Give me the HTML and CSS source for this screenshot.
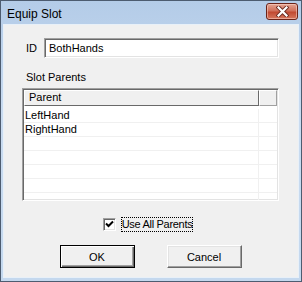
FILE: index.html
```html
<!DOCTYPE html>
<html lang="en">
<head>
  <meta charset="UTF-8">
  <title>Equip Slot</title>
  <link rel="stylesheet" href="styles.css">
</head>
<body>
  <div class="window">
    <div class="titlebar">
      <span class="title">Equip Slot</span>
      <button class="close">
        <svg width="13" height="11" viewBox="0 0 13 11">
          <path d="M2.5 1.5 L10.5 9.5 M10.5 1.5 L2.5 9.5" stroke="#6a2a20" stroke-width="4" stroke-linecap="square"/>
          <path d="M2.5 1.5 L10.5 9.5 M10.5 1.5 L2.5 9.5" stroke="#fff" stroke-width="2.2" stroke-linecap="square"/>
        </svg>
      </button>
    </div>

    <div class="client">
      <div class="id-row">
        <label class="id-label">ID</label>
        <div class="textbox">BothHands</div>
      </div>

      <div class="section-label">Slot Parents</div>

      <div class="listview">
        <div class="lv-header">
          <div class="lv-col main">Parent</div>
          <div class="lv-col rest"></div>
        </div>
        <div class="lv-body" id="rows"></div>
      </div>

      <div class="check-row">
        <span class="checkbox">
          <svg width="9" height="9" viewBox="0 0 9 9">
            <path d="M1 3.5 L3.5 6 L8 1.5" stroke="#000" stroke-width="2" fill="none"/>
          </svg>
        </span>
        <span class="check-label">Use All Parents</span>
      </div>

      <div class="buttons">
        <button class="btn default">OK</button>
        <button class="btn">Cancel</button>
      </div>
    </div>
  </div>

  <script>
    const parents = ["LeftHand", "RightHand", "", "", "", "", ""];
    const rows = document.getElementById('rows');
    parents.forEach(name => {
      const row = document.createElement('div');
      row.className = 'lv-row';
      row.innerHTML = `<div class="lv-cell main">${name}</div><div class="lv-cell rest"></div>`;
      rows.appendChild(row);
    });
  </script>
</body>
</html>
```

FILE: styles.css
```css
body {
  margin: 0;
  font-family: "Liberation Sans", Arial, sans-serif;
  font-size: 11px;
  color: #000;
}
.window {
  width: 302px;
  height: 282px;
  box-sizing: border-box;
  border: 1px solid #4d5c70;
  background: linear-gradient(#b4cce8, #c9dbf0 40%, #c4d8ee);
  display: flex;
  flex-direction: column;
  overflow: hidden;
}
.titlebar {
  height: 24px;
  display: flex;
  align-items: center;
  justify-content: space-between;
  padding: 0 3px 0 6px;
  flex: none;
}
.title {
  font-size: 12px;
  color: #000;
  margin-top: 1px;
}
.close {
  width: 32px;
  height: 17px;
  margin-top: -3px;
  padding: 0;
  border: 1px solid #6b2318;
  border-radius: 3px;
  background: linear-gradient(#e4a593, #d0705b 45%, #c14a32 55%, #d6775e);
  box-shadow: inset 0 0 0 1px rgba(255, 220, 210, 0.5);
  display: flex;
  align-items: center;
  justify-content: center;
}
.client {
  flex: 1;
  margin: 0 3px 4px 3px;
  background: #f0f0f0;
  padding: 13px 19px 0 18px;
  box-shadow: 0 0 0 1px #e8f0f8;
}
.id-row {
  display: flex;
  align-items: center;
  height: 20px;
}
.id-label {
  width: 22px;
  padding-left: 4px;
  box-sizing: border-box;
}
.textbox {
  flex: 1;
  height: 20px;
  box-sizing: border-box;
  background: #fff;
  border-top: 1px solid #a0a0a0;
  border-left: 1px solid #a0a0a0;
  border-right: 1px solid #fff;
  border-bottom: 1px solid #fff;
  box-shadow: inset 1px 1px 0 #696969, inset -1px -1px 0 #e3e3e3;
  padding: 3px 4px 0 4px;
  line-height: 13px;
}
.section-label {
  margin: 13px 0 4px 4px;
  height: 13px;
  line-height: 13px;
}
.listview {
  height: 113px;
  box-sizing: border-box;
  background: #fff;
  border-top: 1px solid #a0a0a0;
  border-left: 1px solid #a0a0a0;
  border-right: 1px solid #fff;
  border-bottom: 1px solid #fff;
  box-shadow: inset 1px 1px 0 #696969, inset -1px -1px 0 #e3e3e3;
  padding: 1px;
  overflow: hidden;
}
.lv-header {
  display: flex;
  height: 16px;
}
.lv-col {
  box-sizing: border-box;
  height: 16px;
  background: #f0f0f0;
  border-top: 1px solid #fff;
  border-left: 1px solid #fff;
  border-right: 1px solid #696969;
  border-bottom: 1px solid #696969;
  line-height: 13px;
  padding-left: 4px;
}
.lv-col.main {
  width: 235px;
}
.lv-col.rest {
  flex: 1;
  border-right-color: #a0a0a0;
  border-bottom-color: #a0a0a0;
}
.lv-body {
  padding-top: 3px;
}
.lv-row {
  display: flex;
  height: 14px;
  box-sizing: border-box;
  border-bottom: 1px solid #f0f0f0;
}
.lv-cell {
  line-height: 13px;
  box-sizing: border-box;
}
.lv-cell.main {
  width: 235px;
  padding-left: 1px;
  border-right: 1px solid #f0f0f0;
}
.lv-cell.rest {
  flex: 1;
}
.check-row {
  margin-top: 15px;
  height: 16px;
  display: flex;
  align-items: center;
  justify-content: center;
  gap: 5px;
  padding-right: 5px;
}
.checkbox {
  width: 13px;
  height: 13px;
  box-sizing: border-box;
  background: #fff;
  border-top: 1px solid #a0a0a0;
  border-left: 1px solid #a0a0a0;
  border-right: 1px solid #fff;
  border-bottom: 1px solid #fff;
  box-shadow: inset 1px 1px 0 #696969, inset -1px -1px 0 #e3e3e3;
  display: flex;
  align-items: center;
  justify-content: center;
}
.check-label {
  border: 1px dotted #000;
  padding: 0;
  line-height: 13px;
  letter-spacing: -0.3px;
}
.buttons {
  margin-top: 13px;
  display: flex;
  justify-content: center;
  gap: 32px;
}
.btn {
  width: 75px;
  height: 23px;
  font: inherit;
  background: #f0f0f0;
  border-top: 1px solid #fff;
  border-left: 1px solid #fff;
  border-right: 1px solid #696969;
  border-bottom: 1px solid #696969;
  box-shadow: inset -1px -1px 0 #a0a0a0, inset 1px 1px 0 #e3e3e3;
  padding: 0;
}
.btn.default {
  border: 1px solid #000;
  box-shadow: inset 1px 1px 0 #fff, inset -1px -1px 0 #696969, inset -2px -2px 0 #a0a0a0;
}
```
